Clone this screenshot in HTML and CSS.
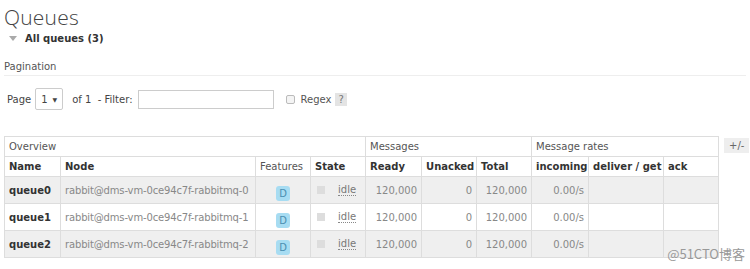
FILE: index.html
```html
<!DOCTYPE html>
<html lang="en">
<head>
    <meta charset="UTF-8">
    <title>Queues</title>
    <link rel="stylesheet" href="styles.css">
</head>
<body>
    <h1>Queues</h1>
    <div class="section-title"><span class="arrow"></span>All queues (3)</div>

    <div class="pagination">
        <h3>Pagination</h3>
        <div class="filter-row">
            <span>Page</span>
            <span class="select">1 <span class="caret">&#9660;</span></span>
            <span>of 1&nbsp; - Filter:</span>
            <input type="text" class="filter">
            <span class="check"></span>
            <span class="regex">Regex</span>
            <span class="help">?</span>
        </div>
    </div>

    <div class="table-wrap">
        <table>
            <colgroup>
                <col style="width:56px"><col style="width:195px"><col style="width:55px"><col style="width:55px">
                <col style="width:56px"><col style="width:55px"><col style="width:55px">
                <col style="width:57px"><col style="width:75px"><col style="width:55px">
            </colgroup>
            <thead>
                <tr class="group">
                    <th colspan="4">Overview</th>
                    <th colspan="3">Messages</th>
                    <th colspan="3">Message rates</th>
                </tr>
                <tr class="cols">
                    <th>Name</th>
                    <th>Node</th>
                    <th class="plain">Features</th>
                    <th>State</th>
                    <th>Ready</th>
                    <th>Unacked</th>
                    <th>Total</th>
                    <th>incoming</th>
                    <th>deliver / get</th>
                    <th>ack</th>
                </tr>
            </thead>
            <tbody>
                <tr class="alt">
                    <td class="name">queue0</td>
                    <td class="node">rabbit@dms-vm-0ce94c7f-rabbitmq-0</td>
                    <td class="c"><span class="badge">D</span></td>
                    <td><span class="state"><span class="dot"></span><abbr>idle</abbr></span></td>
                    <td class="r">120,000</td>
                    <td class="r">0</td>
                    <td class="r">120,000</td>
                    <td class="r">0.00/s</td>
                    <td></td>
                    <td></td>
                </tr>
                <tr>
                    <td class="name">queue1</td>
                    <td class="node">rabbit@dms-vm-0ce94c7f-rabbitmq-1</td>
                    <td class="c"><span class="badge">D</span></td>
                    <td><span class="state"><span class="dot"></span><abbr>idle</abbr></span></td>
                    <td class="r">120,000</td>
                    <td class="r">0</td>
                    <td class="r">120,000</td>
                    <td class="r">0.00/s</td>
                    <td></td>
                    <td></td>
                </tr>
                <tr class="alt">
                    <td class="name">queue2</td>
                    <td class="node">rabbit@dms-vm-0ce94c7f-rabbitmq-2</td>
                    <td class="c"><span class="badge">D</span></td>
                    <td><span class="state"><span class="dot"></span><abbr>idle</abbr></span></td>
                    <td class="r">120,000</td>
                    <td class="r">0</td>
                    <td class="r">120,000</td>
                    <td class="r">0.00/s</td>
                    <td></td>
                    <td></td>
                </tr>
            </tbody>
        </table>
        <span class="toggle">+/-</span>
    </div>

    <div class="watermark">@51CTO博客</div>
</body>
</html>
```

FILE: styles.css
```css
* {
    margin: 0;
    padding: 0;
    box-sizing: border-box;
}
body {
    font-family: "DejaVu Sans", Verdana, sans-serif;
    font-size: 10px;
    color: #484848;
    background: #fff;
    padding: 0 4px;
    position: relative;
    height: 269px;
    overflow: hidden;
}
h1 {
    font-family: "Open Sans", sans-serif;
    font-weight: 300;
    font-size: 21px;
    color: #444;
    line-height: 24px;
    padding-top: 5px;
    letter-spacing: 0.2px;
}
.section-title {
    display: flex;
    align-items: center;
    font-weight: bold;
    font-size: 10px;
    color: #333;
    margin-top: 2px;
    padding-left: 5px;
    height: 14px;
}
.arrow {
    width: 0;
    height: 0;
    border-left: 4px solid transparent;
    border-right: 4px solid transparent;
    border-top: 5px solid #aaa;
    margin-right: 8px;
}
.pagination h3 {
    font-weight: normal;
    font-size: 10px;
    color: #555;
    margin-top: 16px;
    padding-bottom: 3px;
    border-bottom: 1px solid #eee;
}
.filter-row {
    display: flex;
    align-items: center;
    margin-top: 12px;
    padding-left: 3px;
    height: 22px;
    color: #444;
}
.select {
    display: inline-flex;
    align-items: center;
    width: 28px;
    height: 22px;
    border: 1px solid #ccc;
    border-radius: 2px;
    padding-left: 5px;
    margin: 0 9px 0 4px;
    font-size: 10px;
}
.caret {
    font-size: 6px;
    margin-left: 5px;
}
.filter {
    width: 136px;
    height: 19px;
    border: 1px solid #ccc;
    margin-left: 5px;
}
.check {
    width: 9px;
    height: 9px;
    border: 1px solid #bbb;
    border-radius: 2px;
    background: #f4f4f4;
    margin-left: 12px;
}
.regex {
    margin-left: 6px;
    color: #555;
}
.help {
    background: #e4e4e4;
    color: #777;
    padding: 1px 3px;
    margin-left: 4px;
}
.table-wrap {
    display: flex;
    align-items: flex-start;
    margin-top: 26px;
}
table {
    border-collapse: collapse;
    table-layout: fixed;
    width: 714px;
}
th, td {
    border: 1px solid #ddd;
    text-align: left;
    white-space: nowrap;
    overflow: hidden;
    padding: 0 4px;
}
.group th {
    font-weight: normal;
    color: #555;
    height: 20px;
}
.cols th {
    font-weight: bold;
    color: #333;
    height: 20px;
}
.cols th.plain {
    font-weight: normal;
    color: #555;
}
td {
    height: 27px;
    color: #888;
}
td.node {
    letter-spacing: -0.15px;
}
tr.alt td {
    background: #efefef;
}
td.name {
    font-weight: bold;
    color: #333;
}
td.r {
    text-align: right;
}
td.c {
    text-align: center;
}
.badge {
    display: inline-block;
    width: 14px;
    height: 15px;
    line-height: 15px;
    margin-top: 6px;
    border-radius: 3px;
    background: #a7dcf2;
    color: #4a8fb0;
    text-align: center;
    font-size: 10px;
}
.state {
    display: flex;
    align-items: center;
}
.dot {
    width: 8px;
    height: 8px;
    background: #ddd;
    margin: 0 13px 0 2px;
}
abbr {
    text-decoration: none;
    border-bottom: 1px dotted #888;
    color: #777;
}
.toggle {
    margin-left: 5px;
    margin-top: 2px;
    background: #eee;
    color: #666;
    padding: 2px 5px;
    font-size: 10px;
}
.watermark {
    position: absolute;
    right: 5px;
    bottom: 6px;
    font-family: "Noto Sans CJK SC", sans-serif;
    font-size: 13px;
    color: #999;
}
```
